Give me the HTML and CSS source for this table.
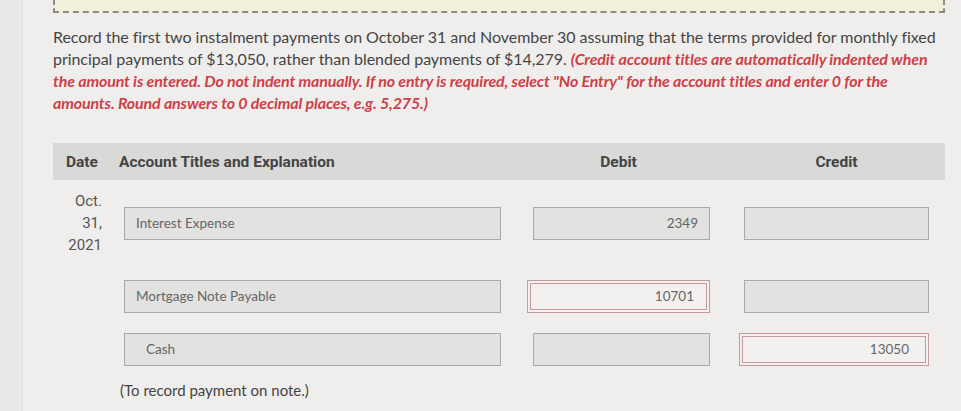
FILE: index.html
```html
<!DOCTYPE html>
<html>
<head>
<meta charset="utf-8">
<link rel="stylesheet" href="styles.css">
</head>
<body>
<div class="page">
  <div class="strip"></div>
  <div class="main">
    <div class="notice"></div>
    <p class="question">Record the first two instalment payments on October 31 and November 30 assuming that the terms provided for monthly fixed principal payments of $13,050, rather than blended payments of $14,279. <em class="hint">(Credit account titles are automatically indented when<br>the amount is entered. Do not indent manually. If no entry is required, select "No Entry" for the account titles and enter 0 for the<br>amounts. Round answers to 0 decimal places, e.g. 5,275.)</em></p>

    <div class="journal">
      <div class="head">
        <div class="h-date">Date</div>
        <div class="h-acct">Account Titles and Explanation</div>
        <div class="h-debit">Debit</div>
        <div class="h-credit">Credit</div>
      </div>

      <div class="row row-first">
        <div class="date">Oct.<br>31,<br>2021</div>
        <div class="field acct">Interest Expense</div>
        <div class="field num debit">2349</div>
        <div class="field num credit"></div>
      </div>

      <div class="row row-second">
        <div class="date"></div>
        <div class="field acct">Mortgage Note Payable</div>
        <div class="field num debit flagged">10701</div>
        <div class="field num credit"></div>
      </div>

      <div class="row row-third">
        <div class="date"></div>
        <div class="field acct indent">Cash</div>
        <div class="field num debit"></div>
        <div class="field num credit flagged">13050</div>
      </div>

      <div class="memo">(To record payment on note.)</div>
    </div>
  </div>
</div>
</body>
</html>
```

FILE: styles.css
```css
* { box-sizing: border-box; }
html, body { margin: 0; padding: 0; }
body {
  background: #efeeec;
  font-family: Lato, "Open Sans", sans-serif;
  color: #444;
  width: 961px;
  height: 411px;
  overflow: hidden;
}
.page { display: flex; height: 411px; }
.strip {
  width: 23px;
  flex: none;
  background: #e8e8e6;
  border-right: 1px solid #dededc;
}
.main {
  flex: 1;
  padding-left: 30px;
  padding-right: 16px;
}
.notice {
  height: 13px;
  background: #f3f0da;
  border: 2px dashed #8e8c80;
  border-top: none;
}
.question {
  margin: 13px 0 0 0;
  font-size: 16px;
  line-height: 22px;
  letter-spacing: -0.05px;
  color: #454545;
}
.hint {
  color: #cf3f48;
  font-style: italic;
  font-weight: 700;
  letter-spacing: -0.15px;
}
.journal { margin-top: 29px; }
.head {
  display: grid;
  grid-template-columns: 66px 382px 209px 219px;
  height: 37px;
  align-items: center;
  background: #d9d9d8;
  font-family: Roboto, sans-serif;
  font-weight: 700;
  font-size: 15.5px;
  color: #444;
}
.h-date { padding-left: 13px; }
.h-debit { padding-left: 26px; text-align: center; }
.h-credit { padding-left: 34px; text-align: center; }
.row {
  display: grid;
  grid-template-columns: 71px 377px 209px 219px;
  align-items: center;
}
.row-first { margin-top: 10px; }
.row-second { margin-top: 24px; }
.row-third { margin-top: 20px; }
.date {
  font-family: Roboto, sans-serif;
  font-size: 15px;
  line-height: 22px;
  color: #555;
  text-align: right;
  padding-right: 22px;
}
.field {
  height: 33px;
  background: #e2e2e0;
  border: 1px solid #a9a9a7;
  font-size: 13.5px;
  line-height: 31px;
  color: #666;
  padding: 0 11px;
  white-space: nowrap;
}
.field.indent { padding-left: 21px; }
.num { text-align: right; }
.debit { justify-self: end; width: 177px; }
.credit { justify-self: end; width: 185px; }
.field.flagged {
  background: #f3f1ef;
  border: 4px double #c49a9a;
  line-height: 25px;
  padding-right: 12px;
}
.debit.flagged { width: 183px; }
.credit.flagged { width: 190px; padding-right: 16px; }
.memo {
  margin-top: 14px;
  padding-left: 67px;
  font-size: 15px;
  line-height: 20px;
  color: #444;
}
```
